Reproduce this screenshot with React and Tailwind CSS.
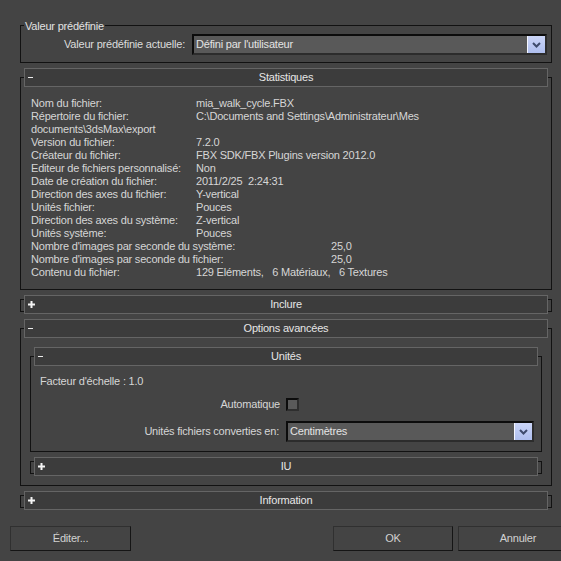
import React from "react";

const stats = [
  ["Nom du fichier:", "mia_walk_cycle.FBX"],
  ["Répertoire du fichier:", "C:\\Documents and Settings\\Administrateur\\Mes"],
  [null, "documents\\3dsMax\\export"],
  ["Version du fichier:", "7.2.0"],
  ["Créateur du fichier:", "FBX SDK/FBX Plugins version 2012.0"],
  ["Editeur de fichiers personnalisé:", "Non"],
  ["Date de création du fichier:", "2011/2/25  2:24:31"],
  ["Direction des axes du fichier:", "Y-vertical"],
  ["Unités fichier:", "Pouces"],
  ["Direction des axes du système:", "Z-vertical"],
  ["Unités système:", "Pouces"],
  ["Nombre d'images par seconde du système:", "25,0", true],
  ["Nombre d'images par seconde du fichier:", "25,0", true],
  ["Contenu du fichier:", "129 Eléments,   6 Matériaux,   6 Textures"],
];

const ToggleIcon = ({ open }) =>
  open ? (
    <span className="block w-[5px] h-[1px] bg-[#ececec]" />
  ) : (
    <svg width="7" height="7" viewBox="0 0 7 7">
      <rect x="2.5" y="0" width="2" height="7" fill="#f4f4f4" />
      <rect x="0" y="2.5" width="7" height="2" fill="#f4f4f4" />
    </svg>
  );

const Header = ({ title, open }) => (
  <div className="relative mx-[3px] h-[19px] border border-[#656565] bg-[#3c3c3c] flex items-center text-[#e6e6e6]">
    <span className="w-[16px] pl-[3px] flex items-center">
      <ToggleIcon open={open} />
    </span>
    <span className="flex-1 text-center">{title}</span>
    <span className="w-[16px]" />
  </div>
);

const Rollout = ({ title, open, className = "", children }) =>
  open ? (
    <div className={`border border-[#121212] ${className}`}>
      <div className="-mt-[10px]">
        <Header title={title} open />
      </div>
      {children}
    </div>
  ) : (
    <div className={`h-[13px] border border-[#121212] ${className}`}>
      <div className="-mt-[5px]">
        <Header title={title} open={false} />
      </div>
    </div>
  );

const Combo = ({ value, className = "" }) => (
  <div
    className={`flex h-[21px] border-2 border-t-[#0c0c0c] border-l-[#0c0c0c] border-r-[#2c2c2c] border-b-[#2c2c2c] bg-[#595959] ${className}`}
  >
    <span className="flex-1 pl-[2px] leading-[17px] text-[#e4e4e4] truncate">
      {value}
    </span>
    <span className="w-[18px] border-l border-[#f4f6ff] bg-gradient-to-b from-[#cbd5f7] to-[#aebeee] flex items-center justify-center">
      <svg width="9" height="6" viewBox="0 0 9 6">
        <path d="M1 1 L4.5 4.5 L8 1" stroke="#3e4b6c" strokeWidth="2" fill="none" />
      </svg>
    </span>
  </div>
);

const Button = ({ label, className = "" }) => (
  <button
    className={`h-[25px] w-[120px] shrink-0 border border-[#303030] border-r-[#151515] border-b-[#151515] bg-[#444444] text-[#d2d2d2] ${className}`}
  >
    {label}
  </button>
);

export default function App() {
  return (
    <div className="w-[561px] h-[561px] overflow-hidden bg-[#444444] pt-[25px] font-['Liberation_Sans',Arial,sans-serif] text-[11px] tracking-[-0.2px] text-[#d6d6d6] leading-[13px]">
      <div className="ml-[20px] w-[532px]">
        {/* Valeur prédéfinie */}
        <div className="h-[38px] border border-[#121212]">
          <div className="-mt-[6px] ml-[3px] w-fit px-[1px] bg-[#444444] text-[#e2e2e2]">
            Valeur prédéfinie
          </div>
          <div className="mt-[1px] flex items-center justify-end gap-[7px] pr-[4px]">
            <span className="text-[#dcdcdc]">Valeur prédéfinie actuelle:</span>
            <Combo value="Défini par l'utilisateur" className="w-[355px]" />
          </div>
        </div>

        {/* Statistiques */}
        <Rollout title="Statistiques" open className="mt-[14px]">
          <div className="pt-[10px] pb-[10px] pl-[10px]">
            {stats.map(([label, value, wide], i) =>
              label === null ? (
                <div key={i} className="h-[13px] whitespace-pre">{value}</div>
              ) : (
                <div key={i} className="flex h-[13px] whitespace-pre">
                  <span className={wide ? "w-[300px] shrink-0" : "w-[165px] shrink-0"}>
                    {label}
                  </span>
                  <span>{value}</span>
                </div>
              )
            )}
          </div>
        </Rollout>

        <Rollout title="Inclure" open={false} className="mt-[9px]" />

        {/* Options avancées */}
        <Rollout title="Options avancées" open className="mt-[16px]">
          <div className="pt-[18px] pb-[11px] px-[9px]">
            <Rollout title="Unités" open>
              <div className="pt-[9px] pb-[9px]">
                <div className="pl-[9px] h-[13px]">Facteur d'échelle : 1.0</div>
                <div className="mt-[10px] grid grid-cols-[1fr_248px] gap-x-[6px] pr-[7px] items-center">
                  <span className="text-right h-[13px]">Automatique</span>
                  <span className="h-[13px] w-[13px] border-2 border-t-[#0c0c0c] border-l-[#0c0c0c] border-r-[#2e2e2e] border-b-[#2e2e2e] bg-[#5a5a5a]" />
                </div>
                <div className="mt-[10px] grid grid-cols-[1fr_248px] gap-x-[7px] pr-[7px] items-center">
                  <span className="text-right">Unités fichiers converties en:</span>
                  <Combo value="Centimètres" />
                </div>
              </div>
            </Rollout>
            <Rollout title="IU" open={false} className="mt-[9px]" />
          </div>
        </Rollout>

        <Rollout title="Information" open={false} className="mt-[9px]" />
      </div>

      {/* Buttons */}
      <div className="mt-[18px] flex pl-[10px]">
        <Button label="Éditer..." className="w-[121px]" />
        <Button label="OK" className="ml-[202px]" />
        <Button label="Annuler" className="ml-[5px]" />
      </div>
    </div>
  );
}
